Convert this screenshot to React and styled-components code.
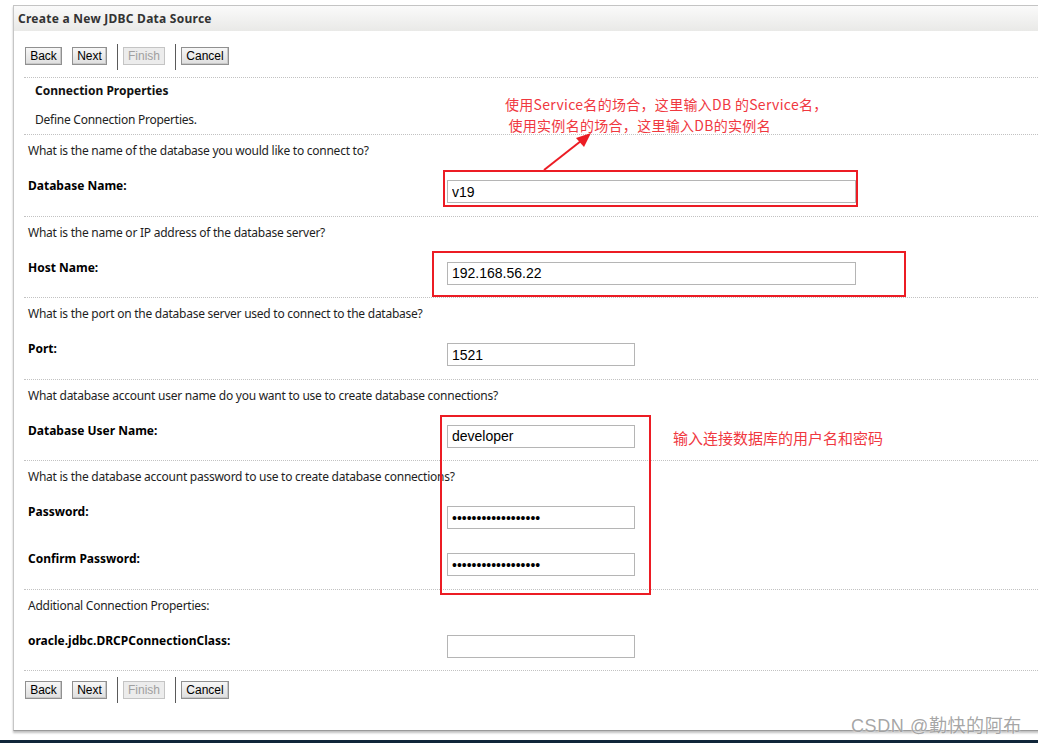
import React from "react";
import styled, { createGlobalStyle } from "styled-components";

const Global = createGlobalStyle`
  html, body { margin: 0; padding: 0; background: #fff; }
  body { font-family: "Noto Sans", "DejaVu Sans", sans-serif; }
  * { box-sizing: border-box; }
`;

const Page = styled.div`
  position: relative;
  height: 743px;
  overflow: hidden;
  display: flex;
  flex-direction: column;
  padding: 5px 0 0 13px;
`;

const Panel = styled.div`
  margin-right: -20px;
  border-left: 1px solid #c6c6c6;
  border-top: 1px solid #c4c4c4;
  border-bottom: 1px solid #9a9a9a;
  box-shadow: 0 2px 2px rgba(0, 0, 0, 0.25);
  background: #fff;
`;

const Header = styled.div`
  height: 25px;
  display: flex;
  align-items: center;
  padding-left: 4px;
  background: linear-gradient(#fafafa, #e9e9e7);
`;

const Title = styled.h1`
  margin: 0;
  font-size: 12px;
  letter-spacing: 0.25px;
  font-weight: bold;
  color: #333;
`;

const ButtonBar = styled.div`
  display: flex;
  align-items: flex-start;
  margin-left: 10px;
  padding-left: 1px;
  height: ${(p) => (p.$bottom ? "60px" : "46px")};
  border-top: ${(p) => (p.$bottom ? "1px dotted #c2c2c2" : "none")};
`;

const Btn = styled.button`
  width: ${(p) => p.$w}px;
  height: 18px;
  margin-top: ${(p) => p.$top}px;
  margin-right: ${(p) => p.$gap}px;
  padding: 0;
  text-align: center;
  font-family: "Liberation Sans", Arial, sans-serif;
  font-size: 12px;
  line-height: 16px;
  color: ${(p) => (p.disabled ? "#a0a0a0" : "#000")};
  background: ${(p) =>
    p.disabled ? "#ececec" : "linear-gradient(#f7f7f7, #dedede)"};
  border: 1px solid ${(p) => (p.disabled ? "#c4c4c4" : "#909090")};
  border-radius: 0;
  box-shadow: ${(p) => (p.disabled ? "none" : "inset -1px -1px 0 #c8c8c8")};
`;

const Sep = styled.span`
  display: block;
  width: 1px;
  height: 26px;
  margin-top: ${(p) => p.$top}px;
  margin-right: 5px;
  background: #5a5a5a;
`;

const Intro = styled.div`
  margin-left: 10px;
  border-top: 1px dotted #c2c2c2;
  padding: 6px 0 7px 11px;
`;

const IntroTitle = styled.div`
  font-size: 12px;
  line-height: 14px;
  font-weight: bold;
  color: #111;
`;

const IntroText = styled.div`
  margin-top: 15px;
  font-size: 12px;
  letter-spacing: -0.25px;
  line-height: 14px;
  color: #222;
`;

const Section = styled.div`
  margin-left: 10px;
  border-top: 1px dotted #c2c2c2;
  padding: 0 0 1.5px 4px;
`;

const Question = styled.div`
  height: 32px;
  line-height: 32px;
  font-size: 12px;
  letter-spacing: -0.25px;
  color: #1e1e1e;
`;

const FieldRow = styled.div`
  display: grid;
  grid-template-columns: 419px auto;
  height: 47px;
`;

const Label = styled.label`
  padding-top: 12px;
  font-size: 12px;
  line-height: 14px;
  font-weight: bold;
  color: #000;
`;

const Input = styled.input`
  margin-top: 13px;
  width: ${(p) => (p.$wide ? "409px" : "188px")};
  height: 23px;
  padding: 0 4px;
  border: 1px solid #b5b5b5;
  font-family: "Liberation Sans", Arial, sans-serif;
  font-size: 14px;
  color: #000;
  background: #fff;
  outline: none;
`;

const BottomBar = styled.div`
  margin: auto 0 0 -13px;
  height: 3px;
  background: #10263a;
`;

const Overlay = styled.svg`
  position: absolute;
  left: 0;
  top: 0;
  pointer-events: none;
`;

const RedBox = styled.div`
  position: absolute;
  border: 2px solid #ec1c24;
  pointer-events: none;
`;

const Note = styled.div`
  position: absolute;
  font-family: "Noto Sans CJK SC", "Noto Sans", sans-serif;
  font-size: ${(p) => p.$size || 14}px;
  letter-spacing: ${(p) => p.$spacing || 0}px;
  line-height: 21px;
  color: #f0383f;
  white-space: pre;
`;

const Watermark = styled.div`
  position: absolute;
  left: 851px;
  top: 711px;
  font-family: "Liberation Sans", "Noto Sans CJK SC", sans-serif;
  font-size: 18px;
  letter-spacing: 0.6px;
  color: rgba(150, 150, 150, 0.85);
  text-shadow: 0 0 2px #fff;
`;

const sections = [
  {
    q: "What is the name of the database you would like to connect to?",
    fields: [{ label: "Database Name:", value: "v19", wide: true }],
  },
  {
    q: "What is the name or IP address of the database server?",
    fields: [{ label: "Host Name:", value: "192.168.56.22", wide: true }],
  },
  {
    q: "What is the port on the database server used to connect to the database?",
    fields: [{ label: "Port:", value: "1521" }],
  },
  {
    q: "What database account user name do you want to use to create database connections?",
    fields: [{ label: "Database User Name:", value: "developer" }],
  },
  {
    q: "What is the database account password to use to create database connections?",
    fields: [
      { label: "Password:", value: "developerpassword1", type: "password" },
      { label: "Confirm Password:", value: "developerpassword1", type: "password" },
    ],
  },
  {
    q: "Additional Connection Properties:",
    fields: [{ label: "oracle.jdbc.DRCPConnectionClass:", value: "" }],
  },
];

function Buttons({ bottom }) {
  const b = bottom ? 10 : 16;
  const s = bottom ? 6 : 13;
  return (
    <ButtonBar $bottom={bottom}>
      <Btn $w={37} $top={b} $gap={10}>Back</Btn>
      <Btn $w={35} $top={b} $gap={10}>Next</Btn>
      <Sep $top={s} />
      <Btn $w={42} $top={b} $gap={10} disabled>Finish</Btn>
      <Sep $top={s} />
      <Btn $w={48} $top={b} $gap={0}>Cancel</Btn>
    </ButtonBar>
  );
}

export default function App() {
  return (
    <>
      <Global />
      <Page>
        <Panel>
          <Header>
            <Title>Create a New JDBC Data Source</Title>
          </Header>
          <Buttons />
          <Intro>
            <IntroTitle>Connection Properties</IntroTitle>
            <IntroText>Define Connection Properties.</IntroText>
          </Intro>
          {sections.map((s, i) => (
            <Section key={i}>
              <Question>{s.q}</Question>
              {s.fields.map((f) => (
                <FieldRow key={f.label}>
                  <Label>{f.label}</Label>
                  <Input
                    type={f.type || "text"}
                    defaultValue={f.value}
                    $wide={f.wide}
                    readOnly
                  />
                </FieldRow>
              ))}
            </Section>
          ))}
          <Buttons bottom />
        </Panel>
        <BottomBar />

        <RedBox style={{ left: 443, top: 170, width: 415, height: 37 }} />
        <RedBox style={{ left: 432, top: 251, width: 474, height: 46 }} />
        <RedBox style={{ left: 440, top: 415, width: 211, height: 180 }} />
        <Overlay width="1038" height="743">
          <line x1="544" y1="170" x2="586" y2="137" stroke="#ec1c24" strokeWidth="2" />
          <polygon points="591,133 576,138 584,147" fill="#ec1c24" />
        </Overlay>
        <Note $spacing={0.3} style={{ left: 505, top: 94 }}>
          {"使用Service名的场合，这里输入DB 的Service名，\n 使用实例名的场合，这里输入DB的实例名"}
        </Note>
        <Note $size={15} style={{ left: 673, top: 427 }}>
          输入连接数据库的用户名和密码
        </Note>
        <Watermark>CSDN @勤快的阿布</Watermark>
      </Page>
    </>
  );
}
